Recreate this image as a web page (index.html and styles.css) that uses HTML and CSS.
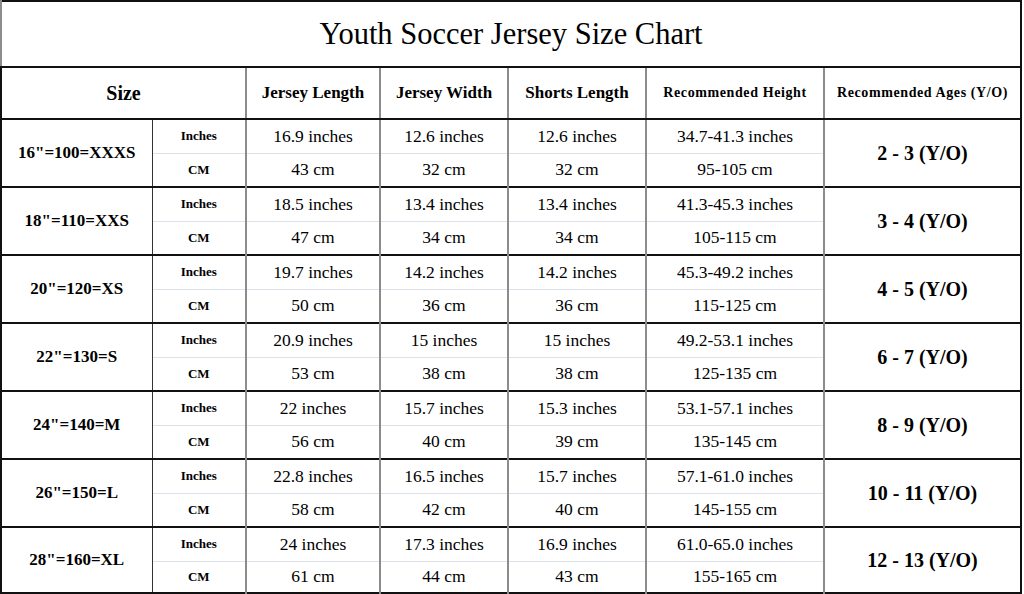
FILE: index.html
```html
<!DOCTYPE html>
<html>
<head>
<meta charset="utf-8">
<link rel="stylesheet" href="styles.css">
</head>
<body>
<table class="chart">
  <colgroup>
    <col class="c-size"><col class="c-unit"><col class="c-jl"><col class="c-jw"><col class="c-sl"><col class="c-rh"><col class="c-ra">
  </colgroup>
  <tr class="title-row"><td colspan="7" class="title">Youth Soccer Jersey Size Chart</td></tr>
  <tr class="head-row">
    <th colspan="2" class="h-size">Size</th>
    <th class="h-mid">Jersey Length</th>
    <th class="h-mid">Jersey Width</th>
    <th class="h-mid">Shorts Length</th>
    <th class="h-small">Recommended Height</th>
    <th class="h-small h-last">Recommended Ages (Y/O)</th>
  </tr>

  <tr class="top"><td rowspan="2" class="size">16"=100=XXXS</td><td class="unit">Inches</td><td class="val">16.9 inches</td><td class="val">12.6 inches</td><td class="val">12.6 inches</td><td class="val">34.7-41.3 inches</td><td rowspan="2" class="age">2 - 3 (Y/O)</td></tr>
  <tr class="bot"><td class="unit">CM</td><td class="val">43 cm</td><td class="val">32 cm</td><td class="val">32 cm</td><td class="val">95-105 cm</td></tr>

  <tr class="top"><td rowspan="2" class="size">18"=110=XXS</td><td class="unit">Inches</td><td class="val">18.5 inches</td><td class="val">13.4 inches</td><td class="val">13.4 inches</td><td class="val">41.3-45.3 inches</td><td rowspan="2" class="age">3 - 4 (Y/O)</td></tr>
  <tr class="bot"><td class="unit">CM</td><td class="val">47 cm</td><td class="val">34 cm</td><td class="val">34 cm</td><td class="val">105-115 cm</td></tr>

  <tr class="top"><td rowspan="2" class="size">20"=120=XS</td><td class="unit">Inches</td><td class="val">19.7 inches</td><td class="val">14.2 inches</td><td class="val">14.2 inches</td><td class="val">45.3-49.2 inches</td><td rowspan="2" class="age">4 - 5 (Y/O)</td></tr>
  <tr class="bot"><td class="unit">CM</td><td class="val">50 cm</td><td class="val">36 cm</td><td class="val">36 cm</td><td class="val">115-125 cm</td></tr>

  <tr class="top"><td rowspan="2" class="size">22"=130=S</td><td class="unit">Inches</td><td class="val">20.9 inches</td><td class="val">15 inches</td><td class="val">15 inches</td><td class="val">49.2-53.1 inches</td><td rowspan="2" class="age">6 - 7 (Y/O)</td></tr>
  <tr class="bot"><td class="unit">CM</td><td class="val">53 cm</td><td class="val">38 cm</td><td class="val">38 cm</td><td class="val">125-135 cm</td></tr>

  <tr class="top"><td rowspan="2" class="size">24"=140=M</td><td class="unit">Inches</td><td class="val">22 inches</td><td class="val">15.7 inches</td><td class="val">15.3 inches</td><td class="val">53.1-57.1 inches</td><td rowspan="2" class="age">8 - 9 (Y/O)</td></tr>
  <tr class="bot"><td class="unit">CM</td><td class="val">56 cm</td><td class="val">40 cm</td><td class="val">39 cm</td><td class="val">135-145 cm</td></tr>

  <tr class="top"><td rowspan="2" class="size">26"=150=L</td><td class="unit">Inches</td><td class="val">22.8 inches</td><td class="val">16.5 inches</td><td class="val">15.7 inches</td><td class="val">57.1-61.0 inches</td><td rowspan="2" class="age">10 - 11 (Y/O)</td></tr>
  <tr class="bot"><td class="unit">CM</td><td class="val">58 cm</td><td class="val">42 cm</td><td class="val">40 cm</td><td class="val">145-155 cm</td></tr>

  <tr class="top"><td rowspan="2" class="size">28"=160=XL</td><td class="unit">Inches</td><td class="val">24 inches</td><td class="val">17.3 inches</td><td class="val">16.9 inches</td><td class="val">61.0-65.0 inches</td><td rowspan="2" class="age">12 - 13 (Y/O)</td></tr>
  <tr class="bot last"><td class="unit">CM</td><td class="val">61 cm</td><td class="val">44 cm</td><td class="val">43 cm</td><td class="val">155-165 cm</td></tr>
</table>
</body>
</html>
```

FILE: styles.css
```css
html, body {
  margin: 0;
  padding: 0;
  background: #ffffff;
}
body {
  font-family: "Liberation Serif", "Times New Roman", serif;
  color: #000;
}
.chart {
  width: 1022px;
  border-collapse: collapse;
  table-layout: fixed;
  border: 2px solid #111;
}
.c-size { width: 151px; }
.c-unit { width: 94px; }
.c-jl { width: 134px; }
.c-jw { width: 128px; }
.c-sl { width: 138px; }
.c-rh { width: 178px; }

td, th {
  padding: 0;
  text-align: center;
  vertical-align: middle;
  border-left: 2px solid #8c8c8c;
}
.title-row { height: 66px; }
.title {
  font-size: 30.5px;
  font-weight: normal;
  border-bottom: 2px solid #111;
}
.head-row { height: 52px; }
.head-row th { border-bottom: 2px solid #111; }
.h-size { font-size: 20px; border-left: none; }
.h-mid { font-size: 17px; }
.h-small { font-size: 14px; letter-spacing: 0.6px; }
.h-last { border-right: 2px solid #111; }

.top, .bot { height: 34px; }
.bot.last { height: 32px; }
.top td { border-top: 2px solid #111; }
.top td.unit, .top td.val { border-bottom: 1px solid #dfe1ea; }
.size {
  font-size: 17px;
  font-weight: bold;
  border-left: none;
  border-right: 1px solid #333;
}
.unit {
  font-size: 13px;
  font-weight: bold;
  border-left: 1px solid #333;
}
.val {
  font-size: 17.5px;
}
.age {
  font-size: 20px;
  font-weight: bold;
  border-right: 2px solid #111;
}
```
